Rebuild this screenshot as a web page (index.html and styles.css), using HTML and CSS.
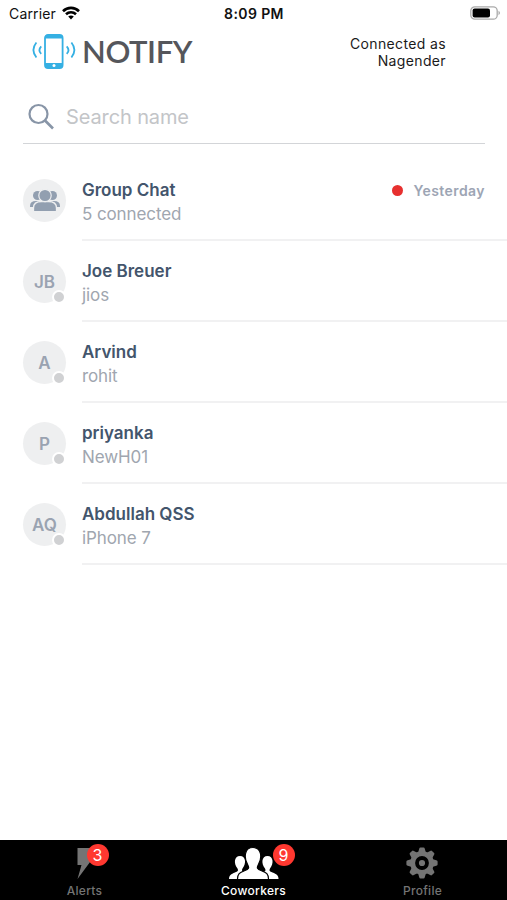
FILE: index.html
```html
<!DOCTYPE html>
<html lang="en">
<head>
<meta charset="utf-8">
<meta name="viewport" content="width=device-width, initial-scale=1">
<title>Notify</title>
<link rel="stylesheet" href="styles.css">
</head>
<body>
<div class="app">
  <div class="status">
    <div class="carrier"><span>Carrier</span>
      <svg width="18" height="14" viewBox="0 0 18 14" fill="none" stroke="#000" stroke-width="2.6"><path d="M1 5.2C5.5.8 12.5.8 17 5.2M4 8.3c2.8-2.7 7.2-2.7 10 0"/><path d="M6.2 10.5c1.6-1.5 4-1.5 5.6 0L9 13.4z" fill="#000" stroke="none"/></svg>
    </div>
    <div class="time">8:09 PM</div>
    <svg class="battery" width="31" height="14" viewBox="0 0 31 14"><rect x=".8" y=".8" width="26.4" height="12.4" rx="4" fill="#fff" stroke="#aaa" stroke-width="1.3"/><rect x="2.6" y="2.6" width="17.4" height="8.8" rx="2" fill="#000"/><path d="M28.5 4.8q3 2.2 0 4.4z" fill="#aaa"/></svg>
  </div>
  <header class="header">
    <div class="logo">
      <svg width="46" height="38" viewBox="0 0 46 38" fill="none" stroke="#35b0e3"><rect x="14" y="2" width="17.6" height="33" rx="3" stroke-width="1.8"/><path d="M14 4.5a2.5 2.5 0 0 1 2.5-2.5h12.6a2.5 2.5 0 0 1 2.5 2.5v1H14zM14 30h17.6v2.5a2.5 2.5 0 0 1-2.5 2.5H16.5a2.5 2.5 0 0 1-2.5-2.5z" fill="#35b0e3" stroke="none"/><circle cx="23" cy="32.4" r="1.5" fill="#fff" stroke="none"/><path d="M5.400 9.500q-6 7.500 0 15M10.200 13.300q-3.600 3.900 0 7.600M40.400 9.500q6 7.500 0 15M35.700 13.300q3.600 3.900 0 7.600" stroke-width="1.8"/></svg>
      <span class="wordmark">NOTIFY</span>
    </div>
    <div class="connected">Connected as<br>Nagender</div>
  </header>
  <div class="search">
    <svg width="28" height="28" viewBox="0 0 28 28" fill="none" stroke="#8895a7" stroke-width="2.2"><circle cx="10.5" cy="11" r="9"/><path d="M17 17.5l8 8" stroke-width="2.6"/></svg>
    <span>Search name</span>
  </div>
  <main class="list">
    <div class="row">
      <div class="avatar"><svg width="32" height="24" viewBox="0 0 32 24" fill="#929fb0"><circle cx="8.5" cy="6.500" r="4.5"/><circle cx="23.5" cy="6.500" r="4.5"/><path d="M1 18v-1q0-5 6-5h18q6 0 6 5v1z"/><path d="M4.500 22.700V19q0-6.500 8-6.500h7q8 0 8 6.500v3.700z" stroke="#eeeff0" stroke-width="1.3"/><circle cx="16" cy="6.500" r="6.200" stroke="#eeeff0" stroke-width="1.2"/></svg></div>
      <div class="body"><div class="info"><div class="name">Group Chat</div><div class="sub">5 connected</div></div><div class="when"><i></i><span>Yesterday</span></div></div>
    </div>
    <div class="row">
      <div class="avatar">JB<i class="dot"></i></div>
      <div class="body"><div class="info"><div class="name">Joe Breuer</div><div class="sub">jios</div></div></div>
    </div>
    <div class="row">
      <div class="avatar">A<i class="dot"></i></div>
      <div class="body"><div class="info"><div class="name">Arvind</div><div class="sub">rohit</div></div></div>
    </div>
    <div class="row">
      <div class="avatar">P<i class="dot"></i></div>
      <div class="body"><div class="info"><div class="name">priyanka</div><div class="sub">NewH01</div></div></div>
    </div>
    <div class="row">
      <div class="avatar">AQ<i class="dot"></i></div>
      <div class="body"><div class="info"><div class="name">Abdullah QSS</div><div class="sub">iPhone 7</div></div></div>
    </div>
  </main>
  <nav class="tabs">
    <div class="tab">
      <div class="icon"><svg width="52" height="36" viewBox="0 0 52 36"><path d="M18.500 5h15l-3 10h3.500L18.500 36l4-14h-4z" fill="#747474"/></svg><b class="badge alerts">3</b></div>
      <span>Alerts</span>
    </div>
    <div class="tab active">
      <div class="icon"><svg width="52" height="36" viewBox="0 0 52 36" fill="#fff"><path d="M1 36c0-3.5 2-5 6-6.5 3-1 3.5-2 2.5-4-4-5-3.5-12.5 2.5-12.5s6.500 7.500 2.500 12.500c-1 2-.5 3 2.500 4 4 1.500 6 3 6 6.500z"/><path d="M28.500 36c0-3.500 2-5 6-6.500 3-1 3.500-2 2.500-4-4-5-3.500-12.500 2.500-12.500s6.500 7.500 2.500 12.500c-1 2-.5 3 2.500 4 4 1.500 6 3 6 6.500z"/><path d="M9.500 36.600c0-5.600 2-7.100 7-8.900 4.500-1.600 5-2.800 3.200-6C15.500 14.500 16.500 4.500 25 4.500s9.500 10 5.300 17.200c-1.800 3.200-1.300 4.400 3.200 6 5 1.800 7 3.300 7 8.900z" stroke="#000" stroke-width="1.2"/></svg><b class="badge coworkers">9</b></div>
      <span>Coworkers</span>
    </div>
    <div class="tab">
      <div class="icon"><svg width="52" height="36" viewBox="0 0 52 36"><g transform="translate(25 20)" fill="#747474"><circle r="11.8"/><g id="teeth"><path d="M-4-10l1.200-4.300q.3-1.300 1.300-1.300h3q1 0 1.300 1.300L4-10z"/><path transform="rotate(45)" d="M-4-10l1.200-4.300q.3-1.300 1.300-1.300h3q1 0 1.300 1.300L4-10z"/><path transform="rotate(90)" d="M-4-10l1.200-4.300q.3-1.300 1.300-1.300h3q1 0 1.300 1.300L4-10z"/><path transform="rotate(135)" d="M-4-10l1.200-4.300q.3-1.300 1.300-1.300h3q1 0 1.300 1.300L4-10z"/></g><use href="#teeth" transform="rotate(180)"/><circle r="5" fill="none" stroke="#000" stroke-width="3.8"/></g></svg></div>
      <span>Profile</span>
    </div>
  </nav>
</div>
</body>
</html>
```
FILE: styles.css
```css
* { box-sizing: border-box; }
body { margin: 0; background: #fff; font-family: Inter, "Liberation Sans", sans-serif; }
svg { display: block; flex: none; }
.app { width: 507px; height: 900px; display: flex; flex-direction: column; overflow: hidden; }
.status { height: 27px; display: grid; grid-template-columns: 1fr auto 1fr; align-items: center; padding: 1px 8px 0 9px; color: #111; font-size: 14px; line-height: 20px; }
.carrier { display: flex; align-items: center; gap: 6px; letter-spacing: .15px; }
.carrier svg { margin-top: -2px; }
.time { font-weight: 600; letter-spacing: .4px; }
.battery { justify-self: end; margin: -2px -2px 0 0; }
.header { height: 63px; display: flex; justify-content: space-between; padding: 6px 61px 0 31px; }
.logo { display: flex; gap: 5px; }
.wordmark { font: 600 31px/36px Lato, sans-serif; color: #55565b; letter-spacing: -.4px; }
.connected { padding-top: 2px; text-align: right; font-size: 14px; line-height: 17px; letter-spacing: .36px; color: #1b1b1b; }
.search { height: 54px; margin: 0 22px 0 23px; padding: 0 0 0 5px; border-bottom: 1px solid #d3d5d8; display: flex; align-items: center; gap: 10px; font-size: 20px; letter-spacing: -.12px; color: #c3c5c8; }
.list { flex: 1; padding-top: 16px; }
.row { display: flex; height: 81px; padding-left: 23px; gap: 16px; }
.avatar { position: relative; flex: none; width: 43px; height: 43px; margin-top: 19px; border-radius: 50%; background: #eeeff0; display: flex; align-items: center; justify-content: center; color: #9aa3b1; font-size: 17px; font-weight: 600; }
.dot { position: absolute; right: 0; bottom: -1px; width: 14px; height: 14px; border: 2.5px solid #fff; border-radius: 50%; background: #d0d1d3; }
.body { flex: 1; display: flex; justify-content: space-between; border-bottom: 2px solid #f1f1f2; padding: 18px 22px 0 0; }
.name { font-size: 17px; font-weight: 600; line-height: 24px; color: #43556c; }
.sub { font-size: 17px; line-height: 24px; color: #a0a6af; letter-spacing: -.1px; }
.when { height: 24px; display: flex; align-items: center; gap: 11px; color: #9da5b4; font-size: 14px; font-weight: 600; letter-spacing: .42px; }
.when i { width: 11px; height: 11px; border-radius: 50%; background: #e7302f; }
.tabs { height: 60px; display: grid; grid-template-columns: repeat(3, 1fr); background: #000; }
.tab { display: flex; flex-direction: column; align-items: center; font-size: 12px; font-weight: 500; letter-spacing: .3px; line-height: 16px; color: #747474; }
.active { color: #fff; }
.icon { position: relative; height: 43px; padding-top: 3px; }
.badge { position: absolute; top: 4px; width: 22px; height: 22px; border-radius: 50%; background: #ff3830; color: #fff; font-size: 16px; font-weight: 400; line-height: 22px; text-align: center; letter-spacing: 0; }
.alerts { left: 28px; }
.coworkers { left: 45px; }
```
